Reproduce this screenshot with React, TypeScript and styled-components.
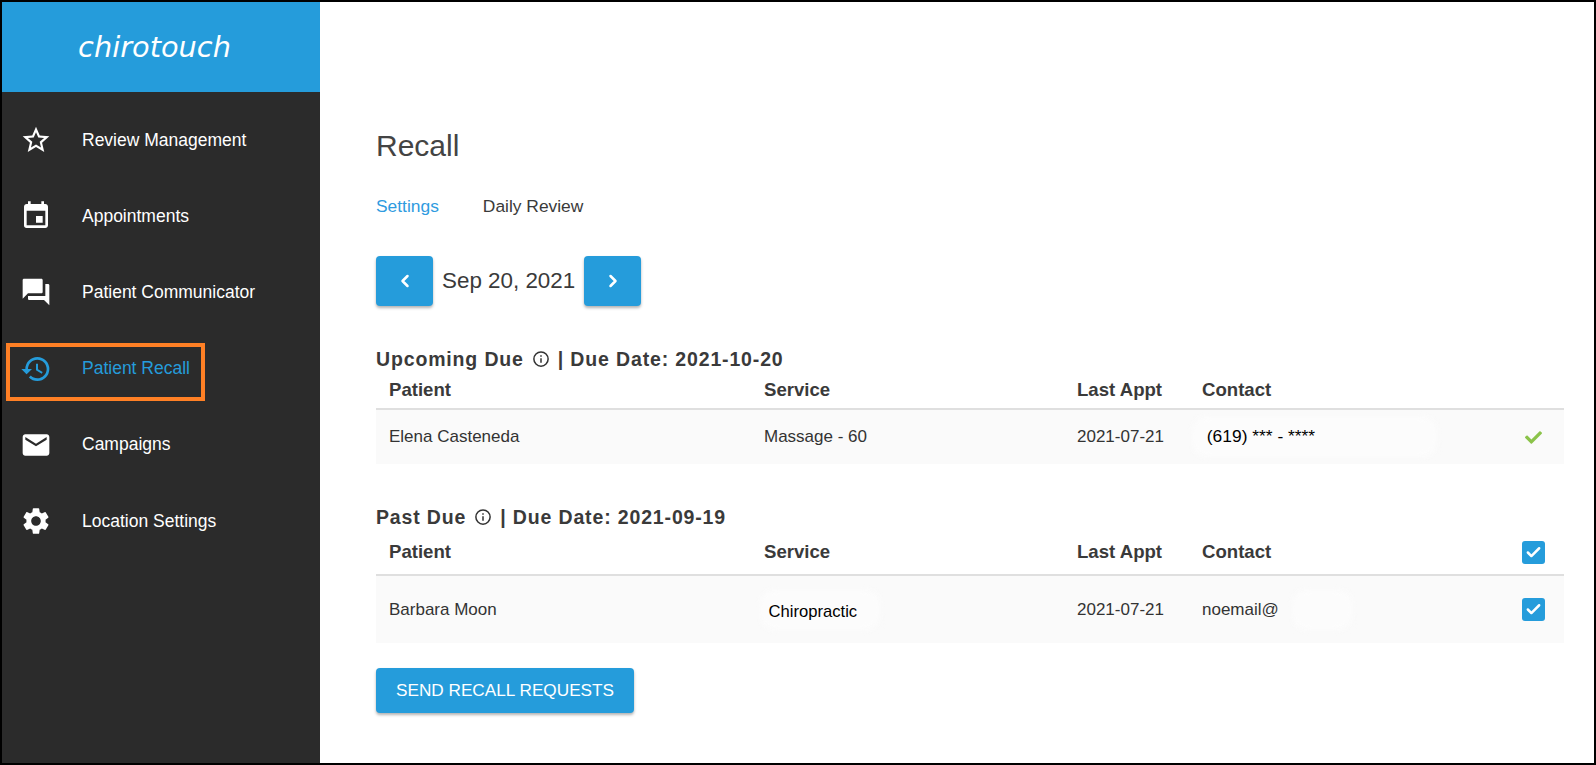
import { createGlobalStyle, styled } from "styled-components";
import { Fragment } from "react";
import { Check, ChevronLeft, ChevronRight } from "lucide-react";
import { FaCheck } from "react-icons/fa";
import {
  MdOutlineStarBorder,
  MdEvent,
  MdForum,
  MdHistory,
  MdEmail,
  MdSettings,
} from "react-icons/md";

const blue = "#259cdb";

const GlobalStyle = createGlobalStyle`
  html, body {
    margin: 0;
    padding: 0;
    height: 100%;
    overflow: hidden;
    background: #fff;
    font-family: "Liberation Sans", Arial, sans-serif;
  }
  * { box-sizing: border-box; }
`;

const Frame = styled.div`
  width: 1596px;
  height: 765px;
  border: 2px solid #000;
  display: flex;
  overflow: hidden;
`;

const Sidebar = styled.aside`
  width: 318px;
  flex: none;
  background: #2b2b2b;
  display: flex;
  flex-direction: column;
`;

const Brand = styled.div`
  height: 90px;
  background: ${blue};
  display: flex;
  align-items: center;
  justify-content: center;
  padding-right: 13px;
  padding-bottom: 1px;
`;

const Logo = styled.span`
  font-family: "DejaVu Sans", sans-serif;
  font-style: italic;
  font-weight: 400;
  font-size: 28.8px;
  color: #fff;
`;

const Menu = styled.nav`
  display: flex;
  flex-direction: column;
  padding-top: 10px;
`;

const MenuItem = styled.div<{ $active?: boolean }>`
  position: relative;
  height: 76.2px;
  display: flex;
  align-items: center;
  padding-left: 18px;
  gap: 30px;
  font-size: 17.5px;
  color: ${(p) => (p.$active ? blue : "#fff")};
  svg {
    width: 32px;
    height: 32px;
    flex: none;
  }
`;

const Highlight = styled.span`
  position: absolute;
  left: 4px;
  top: 12px;
  width: 199px;
  height: 58px;
  border: 4px solid #ff8025;
`;

const Main = styled.main`
  flex: 1;
  padding: 127px 30px 0 56px;
  color: #3a3a3a;
`;

const Title = styled.h1`
  margin: 0;
  font-size: 30px;
  line-height: 34px;
  font-weight: 400;
  color: #444;
`;

const Tabs = styled.div`
  display: flex;
  gap: 44px;
  margin-top: 33px;
  font-size: 17.4px;
  line-height: 20px;
`;

const Tab = styled.span<{ $active?: boolean }>`
  color: ${(p) => (p.$active ? "#2f9be0" : "#3a3a3a")};
`;

const DateRow = styled.div`
  display: flex;
  align-items: center;
  margin-top: 40px;
`;

const ArrowButton = styled.button`
  width: 57px;
  height: 50px;
  padding: 0;
  border: none;
  border-radius: 4px;
  background: ${blue};
  color: #fff;
  display: flex;
  align-items: center;
  justify-content: center;
  box-shadow: 0 2px 3px rgba(0, 0, 0, 0.3);
`;

const DateLabel = styled.span`
  width: 151px;
  padding-left: 9px;
  font-size: 22.4px;
  white-space: nowrap;
`;

const SectionTitle = styled.h2<{ $top: number }>`
  margin: ${(p) => p.$top}px 0 0;
  display: flex;
  align-items: center;
  font-size: 19.5px;
  line-height: 24px;
  font-weight: 700;
  letter-spacing: 0.85px;
  white-space: pre;
`;

const InfoIcon = styled.svg`
  width: 18px;
  height: 18px;
  margin: 0 8px;
  flex: none;
`;

const columns = "375px 313px 125px 1fr 66px";

const HeadRow = styled.div<{ $height: number }>`
  display: grid;
  grid-template-columns: ${columns};
  align-items: center;
  height: ${(p) => p.$height}px;
  padding: 1px 0 0 13px;
  border-bottom: 2px solid #dfdfdf;
  font-size: 18.6px;
  font-weight: 700;
`;

const BodyRow = styled.div<{ $height: number }>`
  position: relative;
  isolation: isolate;
  display: grid;
  grid-template-columns: ${columns};
  align-items: center;
  height: ${(p) => p.$height}px;
  padding-left: 13px;
  background: #fafafa;
  font-size: 17px;
  color: #333;
`;

const Smudge = styled.span<{ $left: number; $w: number }>`
  position: absolute;
  z-index: -1;
  left: ${(p) => p.$left}px;
  top: -10px;
  width: ${(p) => p.$w}px;
  height: 40px;
  background: #fcfcfc;
  border-radius: 14px;
  filter: blur(3px);
`;

const Cell = styled.span`
  position: relative;
  white-space: pre;
`;

const Redacted = styled.span<{ $size: number; $shift: number }>`
  position: relative;
  top: ${(p) => p.$shift}px;
  color: #000;
  font-size: ${(p) => p.$size}px;
  white-space: pre;
`;

const CheckCell = styled.span`
  display: flex;
  justify-content: center;
  padding-left: 4px;
`;

const CheckBox = styled.span`
  width: 23px;
  height: 23px;
  border-radius: 3px;
  background: ${blue};
  color: #fff;
  display: flex;
  align-items: center;
  justify-content: center;
`;

const SendButton = styled.button`
  display: block;
  margin-top: 25px;
  width: 258px;
  height: 45px;
  padding: 0;
  border: none;
  border-radius: 4px;
  background: ${blue};
  color: #fff;
  font-family: inherit;
  font-size: 17.2px;
  box-shadow: 0 2px 3px rgba(0, 0, 0, 0.3);
`;

const navItems = [
  { label: "Review Management", icon: <MdOutlineStarBorder /> },
  { label: "Appointments", icon: <MdEvent /> },
  { label: "Patient Communicator", icon: <MdForum /> },
  { label: "Patient Recall", icon: <MdHistory />, active: true },
  { label: "Campaigns", icon: <MdEmail /> },
  { label: "Location Settings", icon: <MdSettings /> },
];

function Info() {
  return (
    <InfoIcon viewBox="0 0 24 24" fill="none" stroke="#333" strokeWidth="2">
      <circle cx="12" cy="12" r="9.5" />
      <path d="M12 11v6M12 7v2" />
    </InfoIcon>
  );
}

function Tick() {
  return (
    <CheckBox>
      <Check size={17} strokeWidth={3.5} />
    </CheckBox>
  );
}

function TableHead({ height, check }: { height: number; check?: boolean }) {
  return (
    <HeadRow $height={height}>
      <span>Patient</span>
      <span>Service</span>
      <span>Last Appt</span>
      <span>Contact</span>
      <CheckCell>{check && <Tick />}</CheckCell>
    </HeadRow>
  );
}

export default function App() {
  return (
    <Fragment>
      <GlobalStyle />
      <Frame>
        <Sidebar>
          <Brand>
            <Logo>chirotouch</Logo>
          </Brand>
          <Menu>
            {navItems.map((item) => (
              <MenuItem key={item.label} $active={item.active}>
                {item.active && <Highlight />}
                {item.icon}
                {item.label}
              </MenuItem>
            ))}
          </Menu>
        </Sidebar>
        <Main>
          <Title>Recall</Title>
          <Tabs>
            <Tab $active>Settings</Tab>
            <Tab>Daily Review</Tab>
          </Tabs>
          <DateRow>
            <ArrowButton>
              <ChevronLeft size={20} strokeWidth={3} />
            </ArrowButton>
            <DateLabel>Sep 20, 2021</DateLabel>
            <ArrowButton>
              <ChevronRight size={20} strokeWidth={3} />
            </ArrowButton>
          </DateRow>

          <SectionTitle $top={41}>
            Upcoming Due
            <Info />| Due Date: 2021-10-20
          </SectionTitle>
          <TableHead height={39} />
          <BodyRow $height={54}>
            <span>Elena Casteneda</span>
            <span>Massage - 60</span>
            <span>2021-07-21</span>
            <Cell>
              <Smudge $left={-10} $w={245} />
              <Redacted $size={17.4} $shift={-1}> (619) *** - ****</Redacted>
            </Cell>
            <CheckCell>
              <FaCheck size={17} color="#8bc34a" />
            </CheckCell>
          </BodyRow>

          <SectionTitle $top={41}>
            Past Due
            <Info />| Due Date: 2021-09-19
          </SectionTitle>
          <TableHead height={47} check />
          <BodyRow $height={67}>
            <span>Barbara Moon</span>
            <Cell>
              <Smudge $left={-4} $w={120} />
              <Redacted $size={16.6} $shift={2}> Chiropractic</Redacted>
            </Cell>
            <span>2021-07-21</span>
            <Cell>
              noemail@
              <Smudge $left={90} $w={60} />
            </Cell>
            <CheckCell>
              <Tick />
            </CheckCell>
          </BodyRow>

          <SendButton>SEND RECALL REQUESTS</SendButton>
        </Main>
      </Frame>
    </Fragment>
  );
}
